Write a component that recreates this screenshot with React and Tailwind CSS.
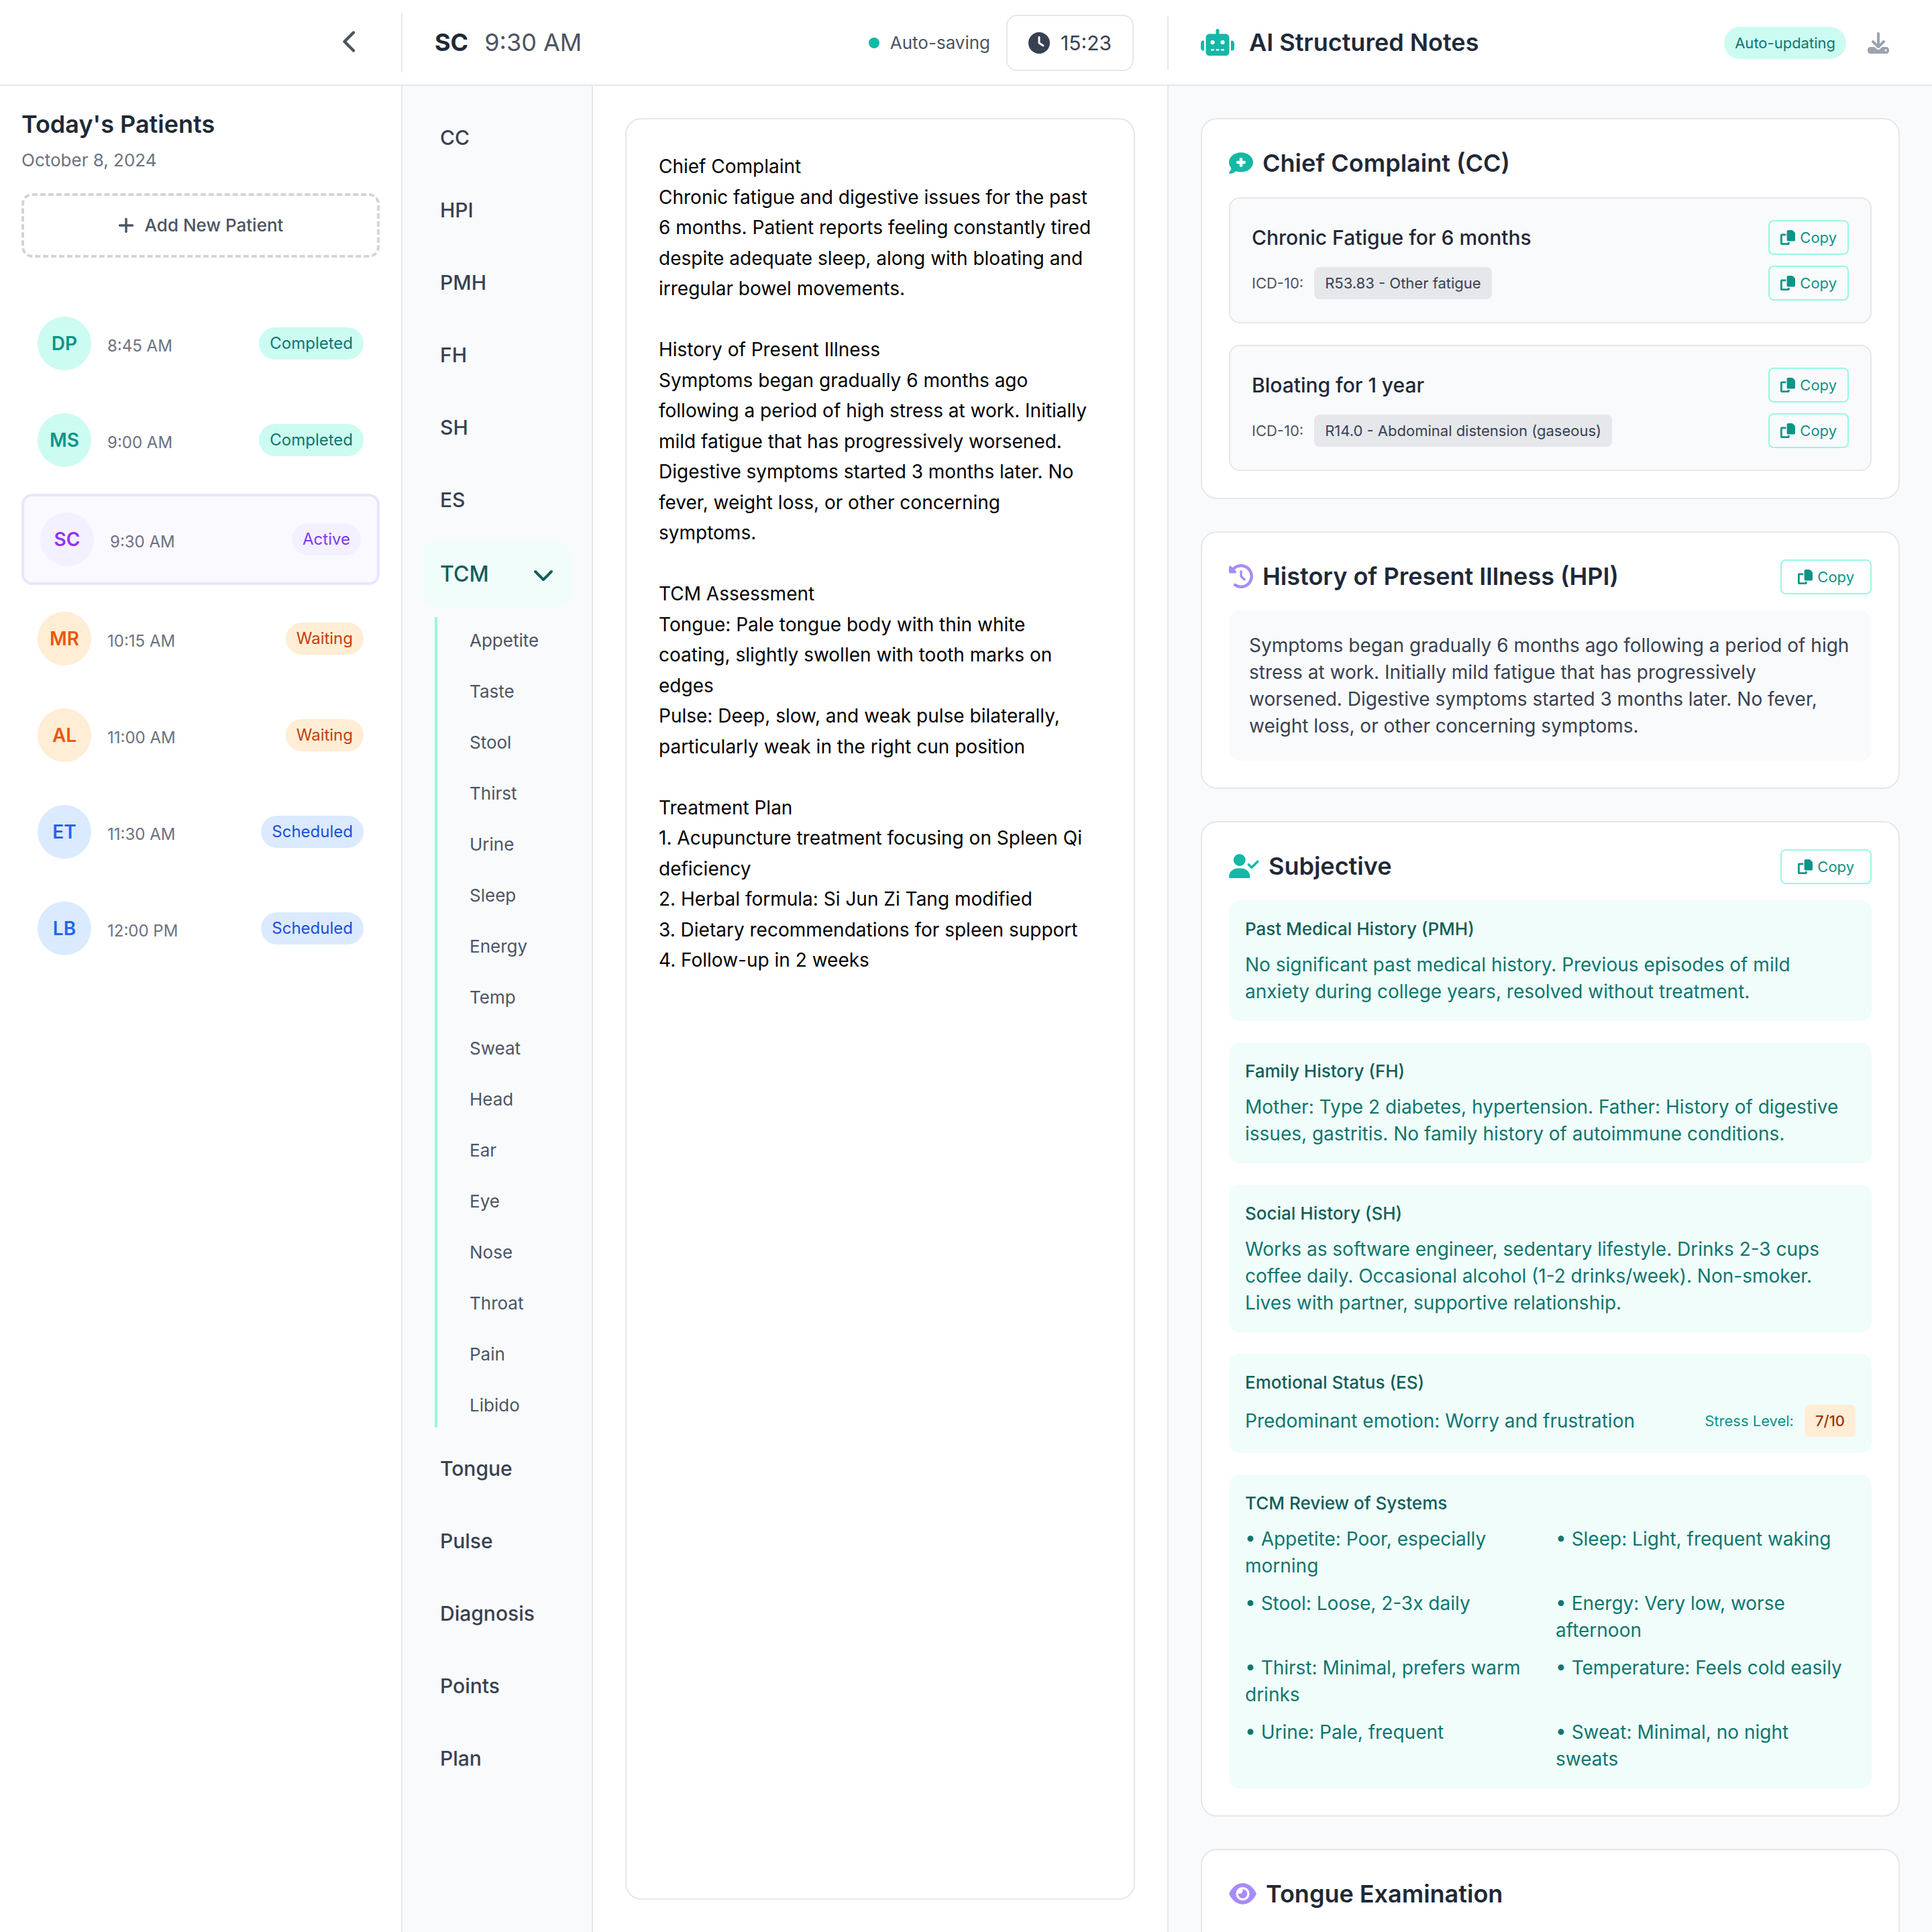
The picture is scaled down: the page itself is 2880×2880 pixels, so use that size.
import React from "react";
import {
  FaChevronLeft,
  FaChevronDown,
  FaClock,
  FaRobot,
  FaDownload,
  FaCommentMedical,
  FaClockRotateLeft,
  FaUserCheck,
  FaEye,
  FaPlus,
} from "react-icons/fa6";

const statusStyles = {
  Completed: { avatar: "bg-[#ccfbf1] text-[#0d9488]", badge: "bg-[#ccfbf1] text-[#0f766e]" },
  Active: { avatar: "bg-[#f3f0ff] text-[#9333ea]", badge: "bg-[#f3f0ff] text-[#7c3aed]" },
  Waiting: { avatar: "bg-[#ffedd5] text-[#ea580c]", badge: "bg-[#ffedd5] text-[#c2410c]" },
  Scheduled: { avatar: "bg-[#dbeafe] text-[#2563eb]", badge: "bg-[#dbeafe] text-[#1d4ed8]" },
};

const patients = [
  { initials: "DP", time: "8:45 AM", status: "Completed" },
  { initials: "MS", time: "9:00 AM", status: "Completed" },
  { initials: "SC", time: "9:30 AM", status: "Active" },
  { initials: "MR", time: "10:15 AM", status: "Waiting" },
  { initials: "AL", time: "11:00 AM", status: "Waiting" },
  { initials: "ET", time: "11:30 AM", status: "Scheduled" },
  { initials: "LB", time: "12:00 PM", status: "Scheduled" },
];

const sectionsBefore = ["CC", "HPI", "PMH", "FH", "SH", "ES"];
const sectionsAfter = ["Tongue", "Pulse", "Diagnosis", "Points", "Plan"];
const tcmItems = [
  "Appetite", "Taste", "Stool", "Thirst", "Urine", "Sleep", "Energy", "Temp",
  "Sweat", "Head", "Ear", "Eye", "Nose", "Throat", "Pain", "Libido",
];

const noteText = `Chief Complaint
Chronic fatigue and digestive issues for the past 6 months. Patient reports feeling constantly tired despite adequate sleep, along with bloating and irregular bowel movements.

History of Present Illness
Symptoms began gradually 6 months ago following a period of high stress at work. Initially mild fatigue that has progressively worsened. Digestive symptoms started 3 months later. No fever, weight loss, or other concerning symptoms.

TCM Assessment
Tongue: Pale tongue body with thin white coating, slightly swollen with tooth marks on edges
Pulse: Deep, slow, and weak pulse bilaterally, particularly weak in the right cun position

Treatment Plan
1. Acupuncture treatment focusing on Spleen Qi deficiency
2. Herbal formula: Si Jun Zi Tang modified
3. Dietary recommendations for spleen support
4. Follow-up in 2 weeks`;

const complaints = [
  { title: "Chronic Fatigue for 6 months", code: "R53.83 - Other fatigue" },
  { title: "Bloating for 1 year", code: "R14.0 - Abdominal distension (gaseous)" },
];

const histories = [
  {
    title: "Past Medical History (PMH)",
    text: "No significant past medical history. Previous episodes of mild anxiety during college years, resolved without treatment.",
  },
  {
    title: "Family History (FH)",
    text: "Mother: Type 2 diabetes, hypertension. Father: History of digestive issues, gastritis. No family history of autoimmune conditions.",
  },
  {
    title: "Social History (SH)",
    text: "Works as software engineer, sedentary lifestyle. Drinks 2-3 cups coffee daily. Occasional alcohol (1-2 drinks/week). Non-smoker. Lives with partner, supportive relationship.",
  },
];

const review = [
  "• Appetite: Poor, especially morning",
  "• Sleep: Light, frequent waking",
  "• Stool: Loose, 2-3x daily",
  "• Energy: Very low, worse afternoon",
  "• Thirst: Minimal, prefers warm drinks",
  "• Temperature: Feels cold easily",
  "• Urine: Pale, frequent",
  "• Sweat: Minimal, no night sweats",
];

function CopyIcon() {
  return (
    <svg viewBox="0 0 512 512" fill="currentColor" className="size-[22px]" aria-hidden="true">
      <path d="M272 0H396.1c12.7 0 24.9 5.1 33.9 14.1l67.9 67.9c9 9 14.1 21.2 14.1 33.9V336c0 26.5-21.5 48-48 48H272c-26.5 0-48-21.5-48-48V48c0-26.5 21.5-48 48-48zM48 128H192v64H64V448H256V416h64v48c0 26.5-21.5 48-48 48H48c-26.5 0-48-21.5-48-48V176c0-26.5 21.5-48 48-48z" />
    </svg>
  );
}

function CopyButton({ wide }) {
  return (
    <button
      type="button"
      className={
        "flex shrink-0 items-center gap-[7px] rounded-lg border-2 border-[#99f6e4] py-2 text-[22px] leading-8 text-[#0d9488] " +
        (wide ? "px-6" : "px-4")
      }
    >
      <CopyIcon />
      Copy
    </button>
  );
}

function Card({ icon, title, copy, children }) {
  return (
    <section className="shrink-0 rounded-3xl border-2 border-[#e5e7eb] bg-white p-10">
      <div className="mb-6 flex h-13 items-center justify-between">
        <h2 className="flex items-center gap-3.5 pb-0.5 text-[36px] leading-[50px] font-semibold text-[#1f2937]">
          {icon}
          {title}
        </h2>
        {copy && <CopyButton wide />}
      </div>
      {children}
    </section>
  );
}

function TealBox({ title, children }) {
  return (
    <div className="rounded-2xl bg-[#f0fdfa] p-6">
      <h3 className="mb-3.5 text-[26px] leading-[38px] font-medium text-[#115e59]">{title}</h3>
      {children}
    </div>
  );
}

function Header() {
  return (
    <header className="flex h-32 shrink-0 items-start border-b-2 border-[#e5e7eb] bg-white pt-5">
      <div className="flex h-22 w-[600px] shrink-0 items-center justify-end border-r-2 border-[#e5e7eb] pr-16">
        <button type="button" aria-label="Collapse patient list" className="pb-1 text-[#4b5563]">
          <FaChevronLeft className="h-9 w-[23px]" />
        </button>
      </div>
      <div className="grid h-22 min-w-0 flex-1 grid-cols-2 items-center">
        <div className="flex items-center justify-between pr-[50px] pl-12">
          <div className="flex items-center gap-6 pb-0.5 text-[36px] leading-[50px]">
            <span className="font-bold text-[#1f2937]">SC</span>
            <span className="text-[#4b5563]">9:30 AM</span>
          </div>
          <div className="flex items-center gap-6">
            <div className="flex items-center gap-4 text-[26px] leading-10 text-[#4b5563]">
              <span className="size-4 rounded-full bg-[#14b8a6]" />
              Auto-saving
            </div>
            <div className="flex h-21 items-center gap-4 rounded-2xl border-2 border-[#e5e7eb] px-[31px] text-[30px] leading-11 text-[#374151]">
              <FaClock className="size-8" />
              15:23
            </div>
          </div>
        </div>
        <div className="flex h-20 items-center justify-between border-l-2 border-[#e5e7eb] pr-16 pl-12">
          <h1 className="flex items-center gap-[22px] pb-0.5 text-[36px] leading-[50px] font-semibold text-[#1f2937]">
            <FaRobot className="h-10 w-[50px] text-[#14b8a6]" />
            AI Structured Notes
          </h1>
          <div className="flex items-center gap-8">
            <span className="rounded-full bg-[#ccfbf1] px-4 py-2 text-[22px] leading-8 text-[#0f766e]">
              Auto-updating
            </span>
            <button type="button" aria-label="Download notes" className="text-[#9ca3af]">
              <FaDownload className="size-8" />
            </button>
          </div>
        </div>
      </div>
    </header>
  );
}

function PatientList() {
  return (
    <aside className="flex w-[600px] shrink-0 flex-col border-r-2 border-[#e5e7eb] bg-white p-8">
      <h2 className="text-[36px] leading-[50px] font-semibold text-[#1f2937]">Today's Patients</h2>
      <p className="mt-2.5 text-[26px] leading-[38px] text-[#6b7280]">October 8, 2024</p>
      <button
        type="button"
        className="mt-[30px] flex h-24 items-center justify-center gap-4 rounded-2xl border-4 border-dashed border-[#d1d5db] text-[26px] leading-[38px] font-medium text-[#4b5563]"
      >
        <FaPlus className="h-7 w-6" />
        Add New Patient
      </button>
      <ul className="mt-16 flex flex-col gap-4">
        {patients.map((p) => {
          const s = statusStyles[p.status];
          return (
            <li
              key={p.initials}
              className={
                "flex items-center gap-6 rounded-2xl p-6 " +
                (p.status === "Active" ? "border-4 border-[#e9e5ff] bg-[#faf9ff]" : "")
              }
            >
              <span className={"flex size-20 items-center justify-center rounded-full text-[28px] font-semibold " + s.avatar}>
                {p.initials}
              </span>
              <span className="flex-1 pt-2 text-[24px] leading-9 text-[#6b7280]">{p.time}</span>
              <span className={"rounded-full px-4 py-2 text-[24px] leading-8 " + s.badge}>{p.status}</span>
            </li>
          );
        })}
      </ul>
    </aside>
  );
}

function NavItem({ label }) {
  return (
    <button type="button" className="rounded-2xl px-6 pt-[23px] pb-[25px] text-left text-[30px] leading-11 font-medium text-[#374151]">
      {label}
    </button>
  );
}

function SectionNav() {
  return (
    <nav className="flex w-[284px] shrink-0 flex-col gap-4 border-r-2 border-[#e5e7eb] bg-[#f9fafb] p-8">
      {sectionsBefore.map((s) => (
        <NavItem key={s} label={s} />
      ))}
      <button
        type="button"
        aria-expanded="true"
        className="flex h-24 shrink-0 items-center justify-between rounded-2xl bg-[#f0fdfa] px-6 text-[32px] leading-12 font-medium text-[#115e59]"
      >
        TCM
        <FaChevronDown className="size-8" />
      </button>
      <div className="ml-4 flex flex-col gap-2 border-l-4 border-[#99f6e4] pl-6">
        {tcmItems.map((t) => (
          <button key={t} type="button" className="px-6 pt-4 pb-3.5 text-left text-[26px] leading-[38px] text-[#4b5563]">
            {t}
          </button>
        ))}
      </div>
      {sectionsAfter.map((s) => (
        <NavItem key={s} label={s} />
      ))}
    </nav>
  );
}

function StructuredNotes() {
  return (
    <main className="flex min-w-0 flex-col gap-12 overflow-hidden border-l-2 border-[#e5e7eb] bg-[#f9fafb] p-12">
      <Card icon={<FaCommentMedical className="size-9 text-[#14b8a6]" />} title="Chief Complaint (CC)">
        <div className="flex flex-col gap-8">
          {complaints.map((c) => (
            <div key={c.title} className="flex flex-col gap-4 rounded-2xl border-2 border-[#e5e7eb] bg-[#f9fafb] p-8">
              <div className="flex items-center justify-between">
                <h3 className="text-[30px] leading-11 font-medium text-[#1f2937]">{c.title}</h3>
                <CopyButton />
              </div>
              <div className="flex items-center justify-between">
                <div className="flex items-center gap-4 text-[22px] leading-8">
                  <span className="text-[#4b5563]">ICD-10:</span>
                  <span className="rounded-lg bg-[#e5e7eb] px-4 py-2 text-[#374151]">{c.code}</span>
                </div>
                <CopyButton />
              </div>
            </div>
          ))}
        </div>
      </Card>

      <Card icon={<FaClockRotateLeft className="size-9 text-[#a78bfa]" />} title="History of Present Illness (HPI)" copy>
        <p className="rounded-2xl bg-[#f9fafb] px-[30px] py-8 text-[28px] leading-10 text-[#374151]">
          Symptoms began gradually 6 months ago following a period of high stress at work. Initially mild fatigue that
          has progressively worsened. Digestive symptoms started 3 months later. No fever, weight loss, or other
          concerning symptoms.
        </p>
      </Card>

      <Card icon={<FaUserCheck className="h-9 w-[45px] text-[#14b8a6]" />} title="Subjective" copy>
        <div className="flex flex-col gap-8 text-[28px] leading-10 text-[#0f766e]">
          {histories.map((h) => (
            <TealBox key={h.title} title={h.title}>
              <p>{h.text}</p>
            </TealBox>
          ))}
          <TealBox title="Emotional Status (ES)">
            <div className="flex items-center justify-between">
              <p>Predominant emotion: Worry and frustration</p>
              <div className="flex items-center gap-4 text-[22px] leading-8">
                <span className="text-[#0d9488]">Stress Level:</span>
                <span className="rounded-lg bg-[#ffedd5] px-4 py-2 font-medium text-[#9a3412]">7/10</span>
              </div>
            </div>
          </TealBox>
          <TealBox title="TCM Review of Systems">
            <ul className="grid grid-cols-2 gap-4">
              {review.map((r) => (
                <li key={r}>{r}</li>
              ))}
            </ul>
          </TealBox>
        </div>
      </Card>

      <Card icon={<FaEye className="h-9 w-[41px] text-[#a78bfa]" />} title="Tongue Examination">
        <div className="h-40" />
      </Card>
    </main>
  );
}

export default function App() {
  return (
    <div className="flex h-screen flex-col overflow-hidden bg-white font-['Inter',sans-serif]">
      <Header />
      <div className="flex min-h-0 flex-1">
        <PatientList />
        <div className="grid min-w-0 flex-1 grid-cols-2 grid-rows-[minmax(0,1fr)]">
          <div className="flex min-w-0">
            <SectionNav />
            <div className="flex min-w-0 flex-1 p-12">
              <textarea
                aria-label="Clinical notes"
                defaultValue={noteText}
                spellCheck={false}
                className="min-w-0 flex-1 resize-none overflow-hidden rounded-3xl border-2 border-[#e5e7eb] bg-white p-12 text-[28px] leading-relaxed text-black"
              />
            </div>
          </div>
          <StructuredNotes />
        </div>
      </div>
    </div>
  );
}
